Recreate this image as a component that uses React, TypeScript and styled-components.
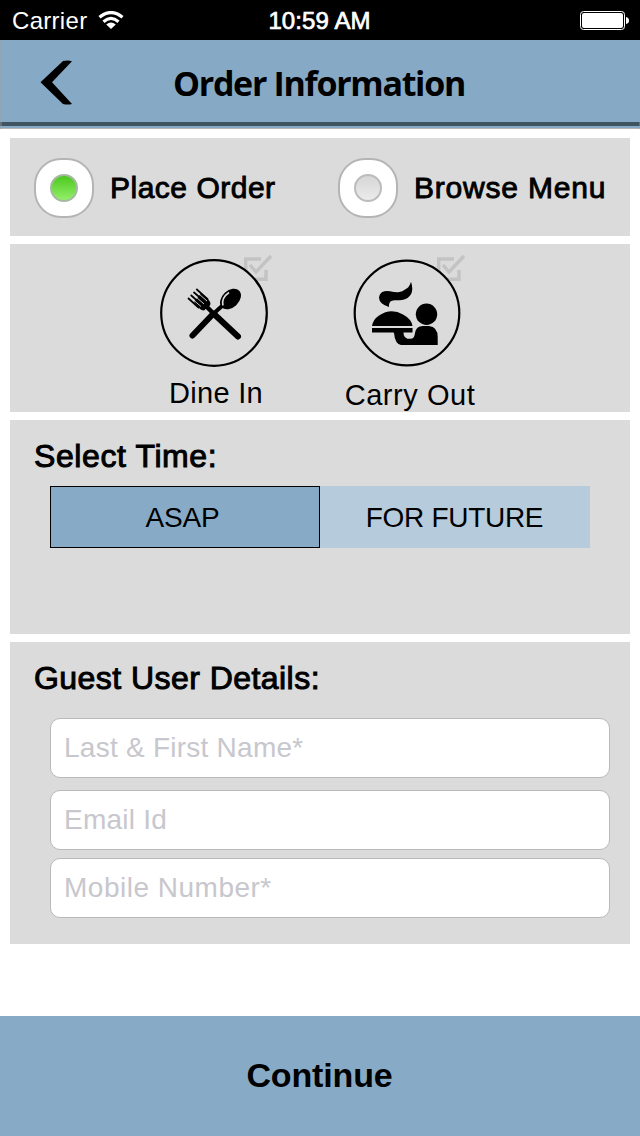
import React from 'react';
import styled, { createGlobalStyle } from 'styled-components';

const GlobalStyle = createGlobalStyle`
  * { box-sizing: border-box; }
  body { margin: 0; background: #fff; }
  button, input { font-family: inherit; margin: 0; }
`;

const sans = `"Liberation Sans", Arial, sans-serif`;

const Screen = styled.div`
  width: 640px;
  height: 1136px;
  display: flex;
  flex-direction: column;
  background: #fff;
  color: #000;
  font-family: ${sans};
  overflow: hidden;
`;

const Label = styled.span<{ $size: number; $track?: number; $weight?: number; $bold?: boolean }>`
  display: block;
  white-space: nowrap;
  font-size: ${(p) => p.$size}px;
  font-weight: ${(p) => (p.$bold ? 700 : 400)};
  line-height: 36px;
  letter-spacing: ${(p) => p.$track ?? 0}px;
  -webkit-text-stroke: ${(p) => p.$weight ?? 0}px currentColor;
`;

const StatusBar = styled.div`
  height: 40px;
  flex: none;
  display: grid;
  grid-template-columns: 1fr auto 1fr;
  align-items: center;
  padding: 2px 11px 0 10px;
  background: #000;
  color: #fff;
`;

const Carrier = styled.div`
  display: flex;
  align-items: center;
  gap: 11px;
  padding-left: 2px;
`;

const Battery = styled.svg`
  justify-self: end;
`;

const Header = styled.header`
  height: 89px;
  flex: none;
  display: grid;
  grid-template-columns: 173px 1fr 173px;
  align-items: center;
  padding-bottom: 3px;
  background: linear-gradient(#86aac6 0 82px, #3f5361 82px 86px, #86aac6 86px 88px, #b5b5b5 88px);
  box-shadow: inset 2px 0 rgba(160, 160, 160, 0.4), inset -1px 0 rgba(160, 160, 160, 0.4);
`;

const BackButton = styled.button`
  border: 0;
  background: none;
  padding: 0 0 1px 40px;
  display: flex;
`;

const Title = styled.h1`
  margin: 0;
  font-family: "Open Sans", "Noto Sans", sans-serif;
  font-size: 34px;
  font-weight: 700;
  line-height: 46px;
  letter-spacing: -1.3px;
  white-space: nowrap;
`;

const Panels = styled.main`
  flex: none;
  display: flex;
  flex-direction: column;
  gap: 8px;
  padding: 9px 10px 0;
`;

const Panel = styled.section<{ $height: number }>`
  height: ${(p) => p.$height}px;
  background: #dbdbdb;
`;

const ModePanel = styled(Panel)`
  display: grid;
  grid-template-columns: 304px 1fr;
  align-items: center;
  padding: 2px 0 0 24px;
`;

const RadioOption = styled.label`
  display: flex;
  align-items: center;
  gap: 16px;
`;

const Radio = styled.span`
  width: 60px;
  height: 60px;
  display: flex;
  align-items: center;
  justify-content: center;
  border: 2px solid #b4b4b4;
  border-radius: 27px;
  background: #fff;
`;

const RadioDot = styled.span<{ $on: boolean }>`
  width: 28px;
  height: 28px;
  border: 2px solid ${(p) => (p.$on ? '#a9b8a5' : '#bcbcbc')};
  border-radius: 50%;
  background: ${(p) => (p.$on ? 'linear-gradient(#4cc81f, #93ef68)' : 'linear-gradient(#d6d6d6, #ebebeb)')};
`;

const ServicePanel = styled(Panel)`
  display: flex;
  padding: 8px 0 0 129px;
  gap: 40px;
`;

const ServiceOption = styled.div<{ $gap: number }>`
  width: 154px;
  display: flex;
  flex-direction: column;
  align-items: center;
  gap: ${(p) => p.$gap}px;
`;

const ServiceIcon = styled.svg<{ $shift: number }>`
  flex: none;
  margin-right: ${(p) => p.$shift}px;
`;

const Heading = styled.h2`
  margin: 0;
  padding: 18px 0 0 24px;
  font-weight: 400;
`;

const Segments = styled.div`
  display: grid;
  grid-template-columns: 1fr 1fr;
  width: 540px;
  height: 62px;
  margin: 12px 0 0 40px;
`;

const Segment = styled.button<{ $active?: boolean }>`
  display: flex;
  align-items: center;
  justify-content: center;
  padding: ${(p) => (p.$active ? '2px 5px 0 0' : '2px 1px 0 0')};
  color: #000;
  border: ${(p) => (p.$active ? '1px solid #000' : '0')};
  background: ${(p) => (p.$active ? '#87abc6' : '#b6cbdc')};
`;

const Fields = styled.div`
  display: flex;
  flex-direction: column;
  padding: 22px 20px 0 40px;
`;

const Field = styled.input<{ $after: number; $track: number }>`
  height: 60px;
  margin-bottom: ${(p) => p.$after}px;
  padding: 0 13px;
  border: 1px solid #b9b9b9;
  border-radius: 10px;
  background: #fff;
  font-size: 28px;
  letter-spacing: ${(p) => p.$track}px;
  &::placeholder { color: #c7c7cd; opacity: 1; }
`;

const ContinueButton = styled.button`
  height: 120px;
  flex: none;
  margin-top: auto;
  display: flex;
  align-items: center;
  justify-content: center;
  border: 0;
  padding: 0 1px 2px 0;
  color: #000;
  background: #87abc6;
`;

const CheckMark = () => (
  <g fill="none" stroke="#c3c3c3" strokeWidth="3.4">
    <path d="M109 7H93.7V27.3H114V18" />
    <path d="M98 13L104 20L119 4" />
  </g>
);

const DineInIcon = () => (
  <ServiceIcon $shift={5} width="124" height="116" viewBox="0 0 124 116">
    <CheckMark />
    <circle cx="62" cy="61" r="52.8" fill="#dbdbdb" stroke="#000" strokeWidth="2.2" />
    <path d="M61 62L40.5 83.5" stroke="#000" strokeWidth="6" strokeLinecap="round" />
    <path d="M70 54L60 63" stroke="#000" strokeWidth="4" />
    <path d="M62 62L86 84.5" stroke="#000" strokeWidth="6" strokeLinecap="round" />
    <path d="M54 54L63 63" stroke="#000" strokeWidth="4.5" />
    <path d="M42 50L48 57Q52 60 54 56.5L57.5 54Q60 51 56 47L49 41.5Z" fill="#000" />
    <path d="M36 46L47 56M38.7 43L50 53M41.5 40L53 50M44.3 37L56 47.5" stroke="#000" strokeWidth="1.7" />
    <path d="M37.5 44.5L49 54.5M40 41.5L52 52M43 38.5L55 49" stroke="#dbdbdb" strokeWidth="0.9" />
    <ellipse cx="78.5" cy="47" rx="12" ry="8.4" transform="rotate(-43 78.5 47)" fill="#000" />
    <path d="M71 53.5Q69 46 77 40.5" fill="none" stroke="#dbdbdb" strokeWidth="1.6" />
  </ServiceIcon>
);

const CarryOutIcon = () => (
  <ServiceIcon $shift={6} width="124" height="116" viewBox="0 0 124 116">
    <CheckMark />
    <circle cx="62" cy="61" r="52.3" fill="#dbdbdb" stroke="#000" strokeWidth="2.2" />
    <path d="M66 29.7Q68.5 37 66 42.3Q63 47 58.3 47.7Q54 48.5 50 48.3Q45.5 48.5 44.5 51Q43.7 52.5 44 55Q39 53.5 36.7 51.3Q34 48.5 34 45.7Q34.5 41.5 37.3 40Q40.5 38.5 45 39.3Q50 40.5 53.3 40.3Q58 39.5 60 37.5Q64.5 35.5 66 29.7Z" />
    <path d="M27 74Q28 67.5 34 63.5Q46 55.5 58 62.5Q66.5 67 67.5 74Z" />
    <path d="M27 76H67.5V80.5H58.5Q58.5 85.5 62.5 86.7H66Q69.5 86.5 70 81Q71 74 78 74H84Q92.7 75 92.7 85V93H56Q50 92 49 81L48.5 80.5H27Z" />
    <circle cx="81.5" cy="62.3" r="10.7" />
  </ServiceIcon>
);

export default function App() {
  return (
    <>
      <GlobalStyle />
      <Screen>
        <StatusBar>
          <Carrier>
            <Label $size={24} $track={0.3}>Carrier</Label>
            <svg width="26" height="20" viewBox="0 0 26 20">
              <g fill="none" stroke="#fff" strokeWidth="3.2">
                <path d="M1.5 6.3Q13 -3.2 24.5 6.3" />
                <path d="M5.5 10.7Q13 4.2 20.5 10.7" />
              </g>
              <path d="M8.2 13.6Q13 9.4 17.8 13.6L13 18Z" fill="#fff" />
            </svg>
          </Carrier>
          <Label $size={24} $track={0.1} $weight={0.7}>10:59 AM</Label>
          <Battery width="50" height="20" viewBox="0 0 50 20">
            <rect x="1.5" y="0.5" width="44" height="18" rx="3" fill="none" stroke="#fff" strokeWidth="1" />
            <rect x="3" y="2" width="41" height="15" rx="2" fill="#fff" />
            <path d="M47 6Q50 6.5 50 9.5Q50 12.5 47 13Z" fill="#fff" />
          </Battery>
        </StatusBar>

        <Header>
          <BackButton aria-label="Back">
            <svg width="34" height="46" viewBox="0 0 34 46">
              <path d="M23 1Q28 0 32 1.2L12 22.2L32 44Q28 45 23 44L0.5 22.2Z" />
            </svg>
          </BackButton>
          <Title>Order Information</Title>
        </Header>

        <Panels>
          <ModePanel $height={98}>
            <RadioOption>
              <Radio><RadioDot $on /></Radio>
              <Label $size={30} $track={0.5} $weight={0.9}>Place Order</Label>
            </RadioOption>
            <RadioOption>
              <Radio><RadioDot $on={false} /></Radio>
              <Label $size={30} $track={0.8} $weight={0.9}>Browse Menu</Label>
            </RadioOption>
          </ModePanel>

          <ServicePanel $height={168}>
            <ServiceOption $gap={7}>
              <DineInIcon />
              <Label $size={29} $track={0.3}>Dine In</Label>
            </ServiceOption>
            <ServiceOption $gap={9}>
              <CarryOutIcon />
              <Label $size={29} $track={0.55}>Carry Out</Label>
            </ServiceOption>
          </ServicePanel>

          <Panel $height={214}>
            <Heading><Label $size={32} $track={0.6} $weight={1}>Select Time:</Label></Heading>
            <Segments>
              <Segment $active><Label $size={28} $track={-0.2}>ASAP</Label></Segment>
              <Segment><Label $size={28} $track={-0.3}>FOR FUTURE</Label></Segment>
            </Segments>
          </Panel>

          <Panel $height={302}>
            <Heading><Label $size={32} $track={0.45} $weight={1}>Guest User Details:</Label></Heading>
            <Fields>
              <Field $after={12} $track={0.25} placeholder="Last &amp; First Name*" />
              <Field $after={8} $track={0.25} placeholder="Email Id" />
              <Field $after={0} $track={0.5} placeholder="Mobile Number*" />
            </Fields>
          </Panel>
        </Panels>

        <ContinueButton><Label $size={34} $track={-0.15} $bold>Continue</Label></ContinueButton>
      </Screen>
    </>
  );
}
